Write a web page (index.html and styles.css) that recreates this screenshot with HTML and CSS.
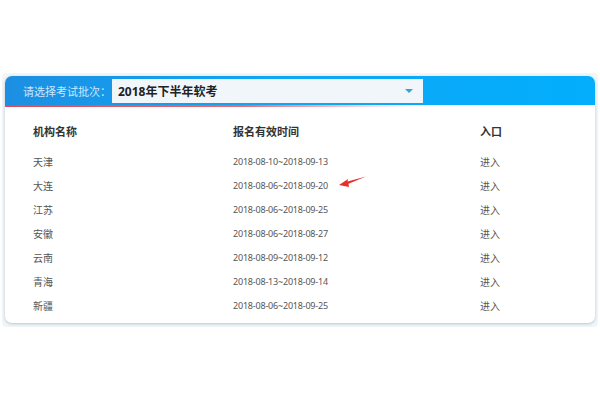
FILE: index.html
```html
<!DOCTYPE html>
<html lang="zh">
<head>
<meta charset="utf-8">
<link rel="stylesheet" href="styles.css">
</head>
<body>
<div class="frame">
  <div class="card">
    <div class="head">
      <span class="label">请选择考试批次：</span>
      <div class="select">
        <span class="sel-text">2018年下半年软考</span>
        <span class="caret"></span>
      </div>
    </div>
    <div class="line"></div>
    <div class="table">
      <div class="row th"><span>机构名称</span><span>报名有效时间</span><span>入口</span></div>
      <div class="rows">
        <div class="row"><span>天津</span><span class="date">2018-08-10~2018-09-13</span><span>进入</span></div>
        <div class="row"><span>大连</span><span class="date mark">2018-08-06~2018-09-20<svg class="arrow" width="30" height="12" viewBox="0 0 30 12"><polygon points="1,9 10,3 9.5,5.5 28,0.5 10.5,7.8 11,11" fill="#e8302a"/></svg></span><span>进入</span></div>
        <div class="row"><span>江苏</span><span class="date">2018-08-06~2018-09-25</span><span>进入</span></div>
        <div class="row"><span>安徽</span><span class="date">2018-08-06~2018-08-27</span><span>进入</span></div>
        <div class="row"><span>云南</span><span class="date">2018-08-09~2018-09-12</span><span>进入</span></div>
        <div class="row"><span>青海</span><span class="date">2018-08-13~2018-09-14</span><span>进入</span></div>
        <div class="row"><span>新疆</span><span class="date">2018-08-06~2018-09-25</span><span>进入</span></div>
      </div>
    </div>
  </div>
</div>
</body>
</html>
```
FILE: styles.css
```css
html, body {
  margin: 0;
  padding: 0;
  background: #ffffff;
  font-family: "Noto Sans", "Noto Sans CJK SC", sans-serif;
}
.frame {
  margin: 73px 2px 0 2px;
  width: 590px;
  padding: 3px 3px 4px 3px;
  background: #f1f6f8;
  border-radius: 4px;
}
.card {
  background: #ffffff;
  border-radius: 7px;
  overflow: hidden;
  box-shadow: 0 1px 3px rgba(120, 140, 160, 0.45);
  padding-bottom: 6px;
}
.head {
  height: 29px;
  display: flex;
  align-items: center;
  padding-left: 18px;
  background: linear-gradient(90deg, #1d8fe2 0%, #0ea6f5 45%, #03aefc 100%);
}
.label {
  font-size: 11px;
  color: #c9e7ff;
  width: 89px;
}
.select {
  width: 295px;
  height: 24px;
  background: #f1f6fa;
  display: flex;
  align-items: center;
  justify-content: space-between;
  padding: 0 10px 0 6px;
}
.sel-text {
  font-size: 12px;
  font-weight: 700;
  color: #222;
}
.caret {
  width: 0;
  height: 0;
  border-left: 4px solid transparent;
  border-right: 4px solid transparent;
  border-top: 4px solid #3a9fd8;
}
.line {
  height: 2px;
  background: linear-gradient(90deg, #e04b55 0%, #e86a72 40%, rgba(255, 255, 255, 0) 70%);
}
.table {
  padding: 12px 0 0 28px;
}
.row {
  display: grid;
  grid-template-columns: 200px 247px 1fr;
  height: 24px;
  align-items: center;
  font-size: 10px;
  color: #555;
}
.date {
  font-size: 9px;
  letter-spacing: -0.2px;
}
.th {
  font-size: 11px;
  font-weight: 700;
  color: #333;
  margin-bottom: 6px;
}
.mark {
  position: relative;
}
.arrow {
  position: absolute;
  left: 105px;
  top: -3px;
}
```
